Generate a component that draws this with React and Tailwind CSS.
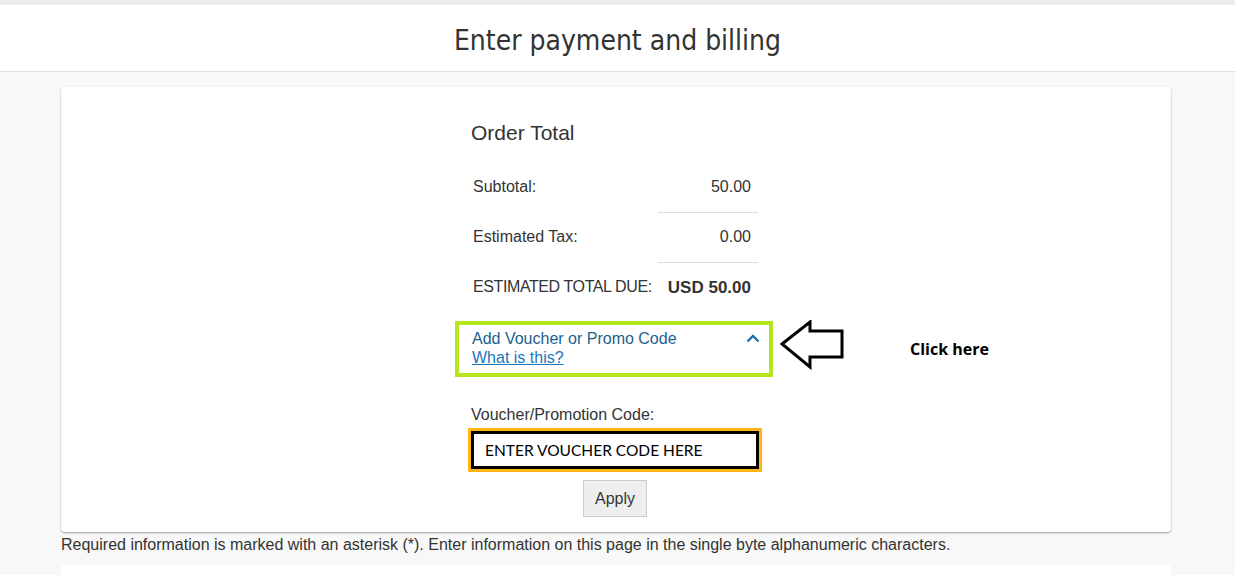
import React, { useState } from "react";

const rows = [
  { label: "Subtotal:", value: "50.00" },
  { label: "Estimated Tax:", value: "0.00" },
];

function ChevronUp() {
  return (
    <svg width="14" height="9" viewBox="0 0 14 9" className="shrink-0">
      <path d="M1.5 7.5 L7 2 L12.5 7.5" fill="none" stroke="#1f6fa8" strokeWidth="2.4" />
    </svg>
  );
}

function OutlineArrow() {
  return (
    <svg width="66" height="50" viewBox="0 0 66 50" className="shrink-0">
      <path
        d="M2 24 L30 2 L30 11 L62 11 L62 37 L30 37 L30 47 Z"
        fill="none"
        stroke="#000"
        strokeWidth="3"
        strokeLinejoin="miter"
      />
    </svg>
  );
}

export default function App() {
  const [code, setCode] = useState("ENTER VOUCHER CODE HERE");

  return (
    <div className="min-h-screen bg-[#f8f8f8] text-[#333] font-['Liberation_Sans',Arial,sans-serif]">
      {/* top strip + page title */}
      <div className="h-[5px] bg-[#ececec]" />
      <header className="h-[67px] bg-white border-b border-[#e0e0e0] flex items-center justify-center">
        <h1 className="text-[28px] text-[#333] font-['DejaVu_Sans_Condensed','Liberation_Sans',sans-serif] font-light pt-[5px]">
          Enter payment and billing
        </h1>
      </header>

      <main className="pl-[61px] pt-[15px]">
        {/* order summary card */}
        <section className="w-[1110px] h-[445px] bg-white rounded-[4px] shadow-[0_1px_2px_rgba(0,0,0,0.35)]">
          <div className="pl-[394px] pt-[32px]">
            <h2 className="pl-[16px] text-[21px] leading-[28px] text-[#333]">Order Total</h2>

            <table className="ml-[10px] mt-[15px] w-[293px] table-fixed border-collapse text-[16px]">
              <tbody>
                {rows.map((r) => (
                  <tr key={r.label} className="h-[50px]">
                    <td className="pl-[8px] align-middle">{r.label}</td>
                    <td className="w-[100px] pr-[7px] text-right align-middle border-b border-[#dddddd]">
                      {r.value}
                    </td>
                  </tr>
                ))}
                <tr className="h-[50px]">
                  <td className="pl-[8px] align-middle whitespace-nowrap tracking-[-0.4px]">ESTIMATED TOTAL DUE:</td>
                  <td className="w-[100px] pr-[7px] text-right align-middle font-bold text-[17px] whitespace-nowrap">
                    USD 50.00
                  </td>
                </tr>
              </tbody>
            </table>

            {/* voucher toggle with annotation */}
            <div className="mt-[9px] flex items-center">
              <div className="w-[318px] h-[56px] border-4 border-[#b5e61d] flex items-start justify-between pl-[13px] pr-[9px] pt-[4px]">
                <div className="flex flex-col text-[16px] leading-[19px]">
                  <button type="button" className="text-left text-[#1d5f8f]">
                    Add Voucher or Promo Code
                  </button>
                  <a href="#" className="text-[#1a75bb] underline">
                    What is this?
                  </a>
                </div>
                <div className="pt-[5px]">
                  <ChevronUp />
                </div>
              </div>
              <div className="ml-[7px] -mt-[8px]">
                <OutlineArrow />
              </div>
              <span className="ml-[64px] text-[16px] font-bold text-black font-['Open_Sans',sans-serif]">
                Click here
              </span>
            </div>

            {/* voucher entry */}
            <div className="pl-[13px] pt-[28px] w-[320px]">
              <label className="block text-[16px] leading-[20px] pl-[3px]">Voucher/Promotion Code:</label>
              <div className="mt-[3px] w-[294px] border-[3px] border-[#ffb515]">
                <input
                  value={code}
                  onChange={(e) => setCode(e.target.value)}
                  className="block w-full h-[38px] border-[3px] border-black px-[11px] text-[15.5px] text-black outline-none bg-white font-['Lato',sans-serif]"
                />
              </div>
              <div className="w-[294px] flex justify-center mt-[8px]">
                <button
                  type="button"
                  className="w-[64px] h-[37px] bg-[#eeeeee] border border-[#cccccc] text-[16px] text-[#333]"
                >
                  Apply
                </button>
              </div>
            </div>
          </div>
        </section>

        <p className="text-[16px] leading-[26px] text-[#333]">
          Required information is marked with an asterisk (*). Enter information on this page in the single byte alphanumeric characters.
        </p>

        <section className="mt-[7px] w-[1110px] h-[60px] bg-white rounded-[4px]" />
      </main>
    </div>
  );
}
